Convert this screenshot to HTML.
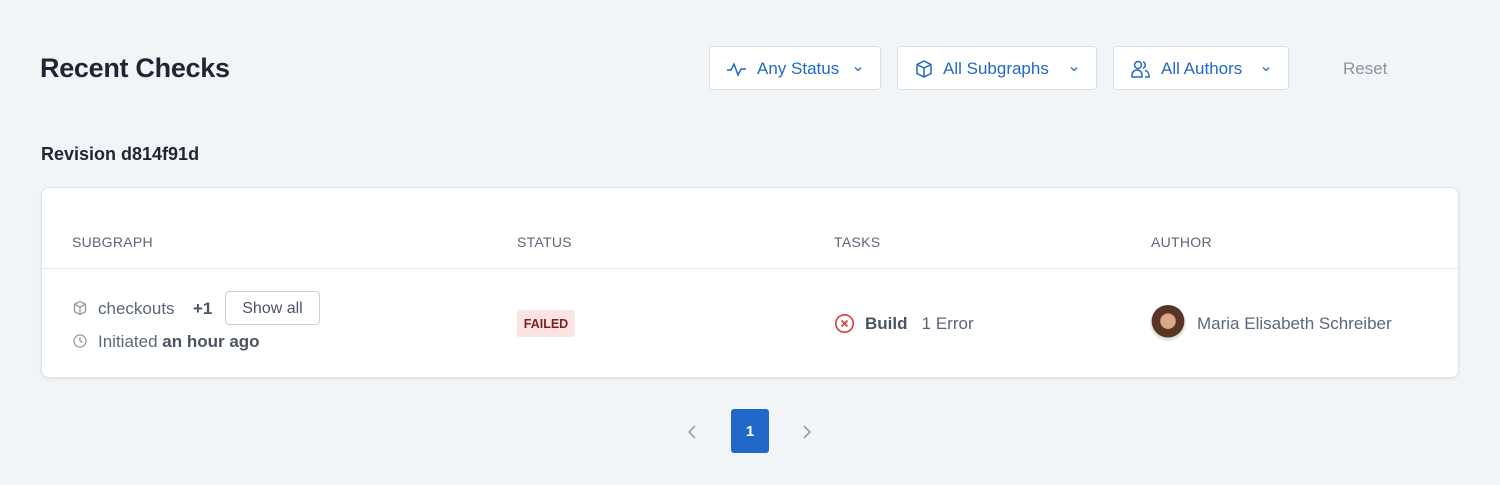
<!DOCTYPE html>
<html><head><meta charset="utf-8"><style>
*{box-sizing:border-box;margin:0;padding:0}
body{width:1500px;height:485px;background:#f2f5f8;font-family:"Liberation Sans",sans-serif;color:#5b6777;position:relative;overflow:hidden}
.abs{position:absolute}
h1{position:absolute;left:40px;top:53px;font-size:27px;font-weight:bold;color:#1f2633;letter-spacing:-0.3px}
.btn{position:absolute;top:46px;height:44px;background:#fff;border:1px solid #d9e0e8;border-radius:4px;color:#2168c9;font-size:17px;display:flex;align-items:center;padding-left:16px;gap:9px;padding-top:2px}
.btn .ch{margin-left:auto;margin-right:16px}
.reset{left:1343px;top:59px;font-size:17px;color:#8a94a1}
h2{position:absolute;left:41px;top:144px;font-size:18px;font-weight:bold;color:#1f2633}
.card{position:absolute;left:41px;top:187px;width:1418px;height:191px;background:#fff;border:1px solid #dde3ea;border-radius:8px;box-shadow:0 1px 3px rgba(0,0,0,.08)}
.th{position:absolute;top:234px;font-size:14px;color:#5b6777;letter-spacing:.3px}
.div{position:absolute;left:42px;width:1416px;top:268px;height:1px;background:#e3e8ee}
.t{position:absolute;font-size:17px;color:#5b6777;white-space:nowrap}
b{color:#4a5463}
</style></head><body>
<h1>Recent Checks</h1>
<div class="btn" style="left:709px;width:172px"><svg width="22" height="16" viewBox="0 0 22 16" fill="none" stroke="#2168c9" stroke-width="1.5"><path d="M1 9h4l3-6 4 11 3-6h5"/></svg>Any Status<svg class="ch" width="12" height="8" viewBox="0 0 12 8" fill="none" stroke="#2168c9" stroke-width="1.3"><path d="M3 2.5l3 3 3-3"/></svg></div>
<div class="btn" style="left:897px;width:200px"><svg width="20" height="20" viewBox="0 0 20 20" fill="none" stroke="#2168c9" stroke-width="1.5"><path d="M10 2l7 3.5v9L10 18l-7-3.5v-9z M3 5.5L10 9l7-3.5 M10 9v9"/></svg>All Subgraphs<svg class="ch" width="12" height="8" viewBox="0 0 12 8" fill="none" stroke="#2168c9" stroke-width="1.3"><path d="M3 2.5l3 3 3-3"/></svg></div>
<div class="btn" style="left:1113px;width:176px"><svg width="22" height="20" viewBox="0 0 22 20" fill="none" stroke="#2168c9" stroke-width="1.5"><circle cx="8" cy="6" r="3.5"/><path d="M2 18v-2a5 5 0 0 1 10 0v2z M13 2.8a3.5 3.5 0 0 1 0 6.5 M15 11.5a5 5 0 0 1 4 4.5v2h-4"/></svg>All Authors<svg class="ch" width="12" height="8" viewBox="0 0 12 8" fill="none" stroke="#2168c9" stroke-width="1.3"><path d="M3 2.5l3 3 3-3"/></svg></div>
<div class="abs reset">Reset</div>
<h2>Revision d814f91d</h2>
<div class="card"></div>
<div class="th" style="left:72px">SUBGRAPH</div>
<div class="th" style="left:517px">STATUS</div>
<div class="th" style="left:834px">TASKS</div>
<div class="th" style="left:1151px">AUTHOR</div>
<div class="div"></div>
<svg class="abs" style="left:72px;top:300px" width="16" height="16" viewBox="0 0 16 16" fill="none" stroke="#8a94a1" stroke-width="1.2"><path d="M8 1.5l5.5 2.8v7.4L8 14.5l-5.5-2.8V4.3z M2.5 4.3L8 7l5.5-2.7 M8 7v7.5"/></svg>
<div class="t" style="left:98px;top:299px">checkouts</div>
<div class="t" style="left:193px;top:299px"><b>+1</b></div>
<div class="abs" style="left:225px;top:291px;width:95px;height:34px;border:1px solid #c9d0d8;border-radius:4px;font-size:16px;color:#4a5463;display:flex;align-items:center;justify-content:center;padding-top:1px">Show all</div>
<svg class="abs" style="left:72px;top:333px" width="16" height="16" viewBox="0 0 16 16" fill="none" stroke="#8a94a1" stroke-width="1.2"><circle cx="8" cy="8" r="6"/><path d="M8 4.5V8l2.5 1.5"/></svg>
<div class="t" style="left:98px;top:332px">Initiated <b>an hour ago</b></div>
<div class="abs" style="left:517px;top:310px;width:58px;height:27px;background:#fde4e4;border-radius:2px;color:#7d1f24;font-size:12.5px;font-weight:bold;display:flex;align-items:center;justify-content:center">FAILED</div>
<svg class="abs" style="left:834px;top:313px" width="21" height="21" viewBox="0 0 21 21" fill="none" stroke="#d93b3b" stroke-width="1.6"><circle cx="10.5" cy="10.5" r="8.7"/><path d="M7.5 7.5l6 6M13.5 7.5l-6 6"/></svg>
<div class="t" style="left:865px;top:314px"><b>Build</b>&nbsp;&nbsp; 1 Error</div>
<div class="abs" style="left:1150px;top:305px;width:36px;height:36px;border-radius:50%;background:radial-gradient(circle at 50% 45%,#d9a78a 0 28%,#5a3524 30% 60%,#e8e4e0 62%)"></div>
<div class="t" style="left:1197px;top:314px">Maria Elisabeth Schreiber</div>
<svg class="abs" style="left:686px;top:424px" width="12" height="16" viewBox="0 0 12 16" fill="none" stroke="#8a94a1" stroke-width="1.5"><path d="M9 2L3 8l6 6"/></svg>
<div class="abs" style="left:731px;top:409px;width:38px;height:44px;background:#2168c9;border-radius:3px;color:#fff;font-size:15px;font-weight:bold;display:flex;align-items:center;justify-content:center">1</div>
<svg class="abs" style="left:801px;top:424px" width="12" height="16" viewBox="0 0 12 16" fill="none" stroke="#8a94a1" stroke-width="1.5"><path d="M3 2l6 6-6 6"/></svg>
</body></html>
